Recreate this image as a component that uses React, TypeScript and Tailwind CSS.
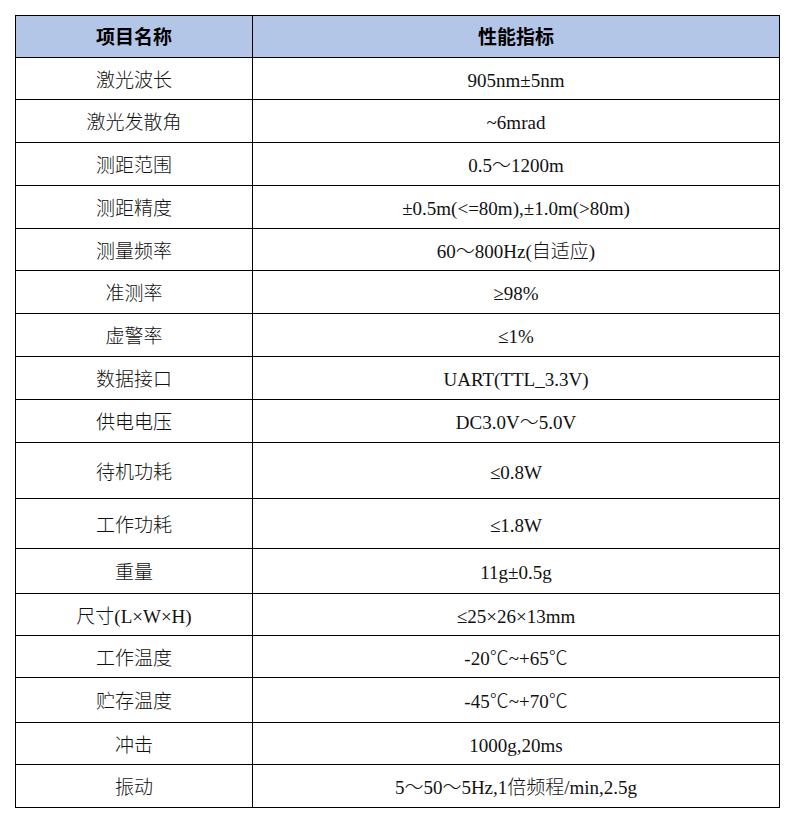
const header = { name: "项目名称", value: "性能指标" };

const rows: { name: string; value: string; h: string }[] = [
  { name: "激光波长", value: "905nm±5nm", h: "h-[42px]" },
  { name: "激光发散角", value: "~6mrad", h: "h-[43px]" },
  { name: "测距范围", value: "0.5～1200m", h: "h-[43px]" },
  { name: "测距精度", value: "±0.5m(<=80m),±1.0m(>80m)", h: "h-[43px]" },
  { name: "测量频率", value: "60～800Hz(自适应)", h: "h-[42px]" },
  { name: "准测率", value: "≥98%", h: "h-[43px]" },
  { name: "虚警率", value: "≤1%", h: "h-[43px]" },
  { name: "数据接口", value: "UART(TTL_3.3V)", h: "h-[43px]" },
  { name: "供电电压", value: "DC3.0V～5.0V", h: "h-[43px]" },
  { name: "待机功耗", value: "≤0.8W", h: "h-[56px]" },
  { name: "工作功耗", value: "≤1.8W", h: "h-[50px]" },
  { name: "重量", value: "11g±0.5g", h: "h-[45px]" },
  { name: "尺寸(L×W×H)", value: "≤25×26×13mm", h: "h-[42px]" },
  { name: "工作温度", value: "-20℃~+65℃", h: "h-[42px]" },
  { name: "贮存温度", value: "-45℃~+70℃", h: "h-[45px]" },
  { name: "冲击", value: "1000g,20ms", h: "h-[42px]" },
  { name: "振动", value: "5～50～5Hz,1倍频程/min,2.5g", h: "h-[42px]" },
];

export default function App() {
  return (
    <div className="min-h-[822px] w-[795px] bg-white pl-[15px] pt-[15px]">
      <div className="w-[765px] border border-black text-black">
        <div className="grid h-[42px] grid-cols-[237px_1fr] border-b border-black bg-[#b4c6e7] font-['Noto_Sans_CJK_SC',sans-serif] text-[19px] font-bold">
          <div className="flex items-center justify-center border-r border-black">{header.name}</div>
          <div className="flex items-center justify-center">{header.value}</div>
        </div>
        {rows.map((row, i) => (
          <div
            key={i}
            className={`grid grid-cols-[237px_1fr] ${row.h} ${i < rows.length - 1 ? "border-b border-black" : ""}`}
          >
            <div className="flex items-center justify-center border-r border-black pt-[5px] font-['Liberation_Serif','Noto_Sans_CJK_SC',serif] text-[19px] font-light text-[#111]">
              {row.name}
            </div>
            <div className="flex items-center justify-center pt-[5px] font-['Liberation_Serif','Noto_Sans_CJK_SC',serif] text-[19px] font-light text-[#111]">
              {row.value}
            </div>
          </div>
        ))}
      </div>
    </div>
  );
}
